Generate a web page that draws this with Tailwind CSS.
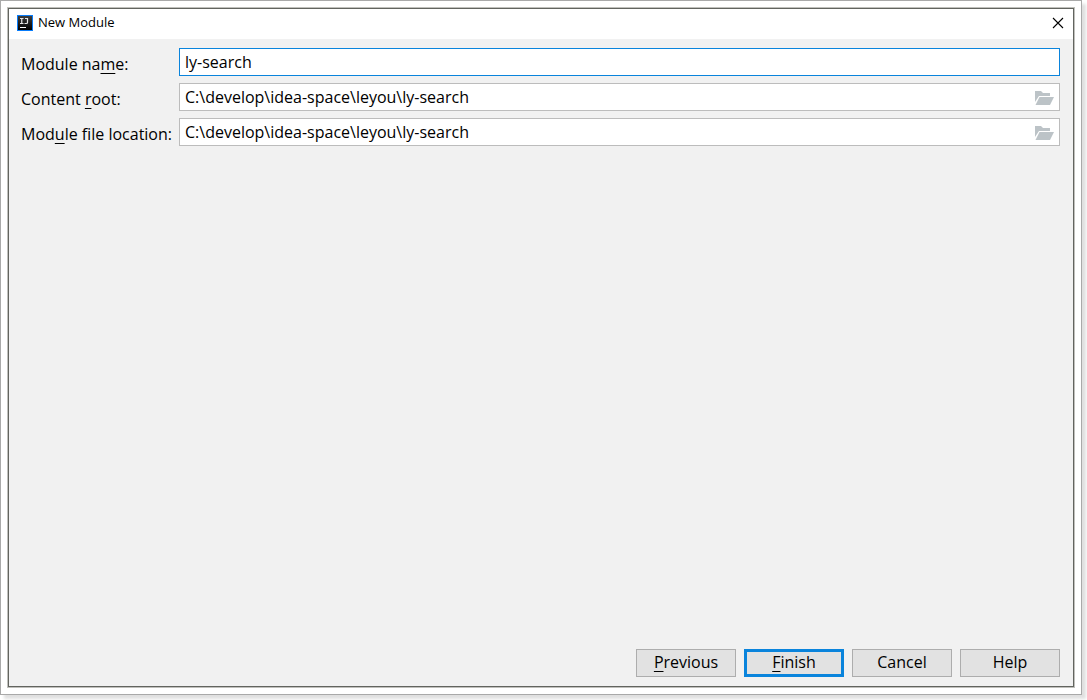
<!DOCTYPE html>
<html lang="en">
<head>
<meta charset="utf-8">
<title>New Module</title>
<script src="https://cdn.jsdelivr.net/npm/@tailwindcss/browser@4"></script>
</head>
<body class="flex h-screen overflow-hidden bg-white pr-[5px] pb-[5px] font-['Open_Sans',sans-serif] text-black">
  <div class="flex flex-1 border border-[#a9a9a9] bg-white p-1.5 shadow-[4px_4px_3px_#e0e0e0]">
    <div class="flex flex-1 border border-[#c0c0bc]">
      <main class="flex min-w-0 flex-1 flex-col border border-[#62645f] bg-[#f1f1f1]">
        <header class="flex h-[30px] items-center bg-white pr-[7px] pb-0.5 pl-2">
          <svg class="size-4" viewBox="0 0 16 16" aria-hidden="true">
            <defs><linearGradient id="logo" x1="0" y1="0" x2="0" y2="1"><stop offset="0" stop-color="#3c3c3c"/><stop offset="1" stop-color="#000"/></linearGradient></defs>
            <rect width="16" height="16" fill="#087cfa"/>
            <rect x="1" y="1" width="14" height="14" fill="url(#logo)"/>
            <path d="M3 3.500h3.500M4.750 3.500v5M3 8.500h3.500M8 3.500h3M10.500 3v4.500q0 1-1 1H7.500" fill="none" stroke="#e4e4e4" stroke-width="1.200"/>
            <path d="M3 12.500h6" stroke="#fff"/>
          </svg>
          <h1 class="ml-[5px] text-[13px]">New Module</h1>
          <button type="button" aria-label="Close" class="ml-auto flex size-4 items-center justify-center">
            <svg class="size-3" viewBox="0 0 12 12"><path d="M1 1l10 10M11 1L1 11" stroke="#000" stroke-width="1.1"/></svg>
          </button>
        </header>
        <form class="flex flex-1 flex-col justify-between px-3 pt-[9px] pb-[9px] text-base">
          <div class="grid grid-cols-[158px_1fr] gap-y-[7px] pr-px">
            <label for="name" class="self-center pt-1 whitespace-nowrap">Module na<span class="underline decoration-1 underline-offset-3">m</span>e:</label>
            <input id="name" value="ly-search" class="h-7 w-full min-w-0 border border-[#0a84dc] bg-white px-[5px] outline-none">
            <label for="root" class="self-center pt-1 whitespace-nowrap">Content <span class="underline decoration-1 underline-offset-3">r</span>oot:</label>
            <div class="flex h-7 items-center border border-[#bcbcbc] bg-white pr-[5px]">
              <input id="root" value="C:\develop\idea-space\leyou\ly-search" class="h-full min-w-0 flex-1 px-[5px] outline-none">
              <button type="button" aria-label="Browse content root"><svg class="block h-4 w-5" viewBox="0 0 20 16" fill="#bcc3c7"><path d="M1 2h6l2 2h7v3H5L1 13z"/><path d="M5.500 8H20l-4 8H1.500z"/></svg></button>
            </div>
            <label for="location" class="self-center pt-1 whitespace-nowrap">Mod<span class="underline decoration-1 underline-offset-3">u</span>le file location:</label>
            <div class="flex h-7 items-center border border-[#bcbcbc] bg-white pr-[5px]">
              <input id="location" value="C:\develop\idea-space\leyou\ly-search" class="h-full min-w-0 flex-1 px-[5px] outline-none">
              <button type="button" aria-label="Browse module file location"><svg class="block h-4 w-5" viewBox="0 0 20 16" fill="#bcc3c7"><path d="M1 2h6l2 2h7v3H5L1 13z"/><path d="M5.500 8H20l-4 8H1.500z"/></svg></button>
            </div>
          </div>
          <div class="flex justify-end gap-2 pr-px">
            <button type="button" class="flex h-7 w-[100px] items-center justify-center border border-[#adadad] bg-[#e2e2e2] pb-0.5"><span class="underline decoration-1 underline-offset-3">P</span>revious</button>
            <button type="submit" class="flex h-7 w-[100px] items-center justify-center border-3 border-[#0a84dc] bg-[#e2e2e2] pb-0.5"><span class="underline decoration-1 underline-offset-3">F</span>inish</button>
            <button type="button" class="flex h-7 w-[100px] items-center justify-center border border-[#adadad] bg-[#e2e2e2] pb-0.5">Cancel</button>
            <button type="button" class="flex h-7 w-[100px] items-center justify-center border border-[#adadad] bg-[#e2e2e2] pb-0.5">Help</button>
          </div>
        </form>
      </main>
    </div>
  </div>
</body>
</html>
